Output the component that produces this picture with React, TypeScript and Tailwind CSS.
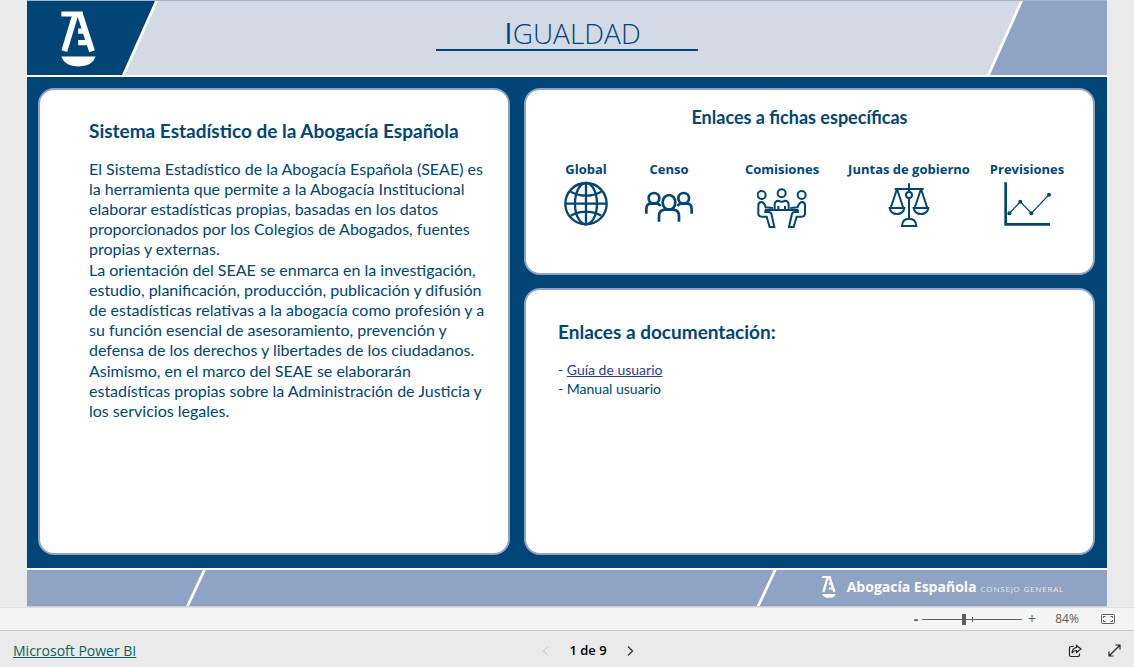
import React from "react";

const LogoMark = ({ className }: { className?: string }) => (
  <svg viewBox="0 0 106 168" className={className} fill="none" stroke="#fff" aria-hidden="true">
    <path d="M1 8H66" strokeWidth="15" />
    <path d="M44 8L10 121" strokeWidth="18" />
    <path d="M57 8L94 121" strokeWidth="18" />
    <path d="M52 60H72M52 95H84" strokeWidth="16" />
    <path d="M1 137H105Q95 167 53 167Q11 167 1 137Z" fill="#fff" stroke="none" />
  </svg>
);

const GlobeIcon = () => (
  <>
    <circle cx="75" cy="68" r="62" />
    <ellipse cx="75" cy="68" rx="33" ry="62" />
    <path d="M75 6V130M13 68H137M29 32Q75 56 121 32M29 104Q75 80 121 104" />
  </>
);

const PeopleIcon = () => (
  <g strokeWidth="8">
    <circle cx="30" cy="52" r="16" />
    <circle cx="119" cy="52" r="16" />
    <ellipse cx="75" cy="64" rx="19" ry="22" />
    <path d="M7 98V84Q7 69 20 68H38Q46 69 50 75" />
    <path d="M143 98V84Q143 69 130 68H112Q104 69 100 75" />
    <path d="M45 122V106Q45 87 62 86H88Q105 87 105 106V122" />
  </g>
);

const MeetingIcon = () => (
  <g strokeWidth="6">
    <circle cx="14" cy="42" r="12" />
    <circle cx="74" cy="37" r="12" />
    <circle cx="134" cy="42" r="12" />
    <path d="M48 81L26 79Q22 64 13 63Q4 63 4 74V99Q5 107 14 107H29L38 138H52L43 98Q41 93 34 93H25V87" />
    <path d="M100 81L122 79Q126 64 135 63Q144 63 144 74V99Q143 107 134 107H119L110 138H96L105 98Q107 93 114 93H123V87" />
    <path d="M24 87H124" />
    <path d="M53 84V70Q54 59 64 59Q74 66 84 59Q94 59 95 70V84M64 84V75M84 84V75" />
  </g>
);

const ScalesIcon = () => (
  <g strokeWidth="6">
    <path d="M75 7V33M75 51V114M32 24H119" />
    <circle cx="75" cy="42" r="9" />
    <path d="M39 24L20 81M39 24L58 81M17 81H61Q58 99 39 99Q20 99 17 81Z" />
    <path d="M111 24L92 81M111 24L130 81M89 81H133Q130 99 111 99Q92 99 89 81Z" />
    <path d="M54 135H97Q96 113 75 113Q55 113 54 135Z" />
  </g>
);

const ChartIcon = () => (
  <>
    <path d="M11 4V130H144" strokeWidth="8" />
    <path d="M22 97L55 62L88 97L141 41" strokeWidth="4" />
    <g fill="#004575" stroke="none">
      <circle cx="22" cy="97" r="6" />
      <circle cx="55" cy="62" r="6" />
      <circle cx="88" cy="97" r="6" />
      <circle cx="141" cy="41" r="6" />
    </g>
  </>
);

const sheets = [
  { title: "Global", Icon: GlobeIcon },
  { title: "Censo", Icon: PeopleIcon },
  { title: "Comisiones", Icon: MeetingIcon },
  { title: "Juntas de gobierno", Icon: ScalesIcon },
  { title: "Previsiones", Icon: ChartIcon },
];

const Panel = ({ className, children }: { className: string; children: React.ReactNode }) => (
  <section className={`rounded-2xl border-2 border-[#8fa3c4] bg-white ${className}`}>
    {children}
  </section>
);

const ReportHeader = () => (
  <header className="flex h-[77px] justify-between border-t border-b-2 border-t-[#a3b6ca] border-b-white bg-[#d3dae6]">
    <div className="w-[131px] bg-white [clip-path:polygon(0_0,100%_0,98px_100%,0_100%)]">
      <div className="h-full w-32 bg-[#004575] pt-[10px] pl-[34px] [clip-path:polygon(0_0,100%_0,95px_100%,0_100%)]">
        <LogoMark className="h-14 w-[35px]" />
      </div>
    </div>

    <div className="mr-3 w-[262px] self-start border-b-2 border-[#004575] pt-4 text-center">
      <h1 className="pl-3 font-['Open_Sans',sans-serif] text-[28px] leading-8 font-light text-[#004575]">
        <span className="text-[30px] font-normal">I</span>GUALDAD
      </h1>
    </div>

    <div className="flex w-[120px] justify-end bg-white [clip-path:polygon(33px_0,100%_0,100%_100%,0_100%)]">
      <div className="h-full w-[117px] bg-[#8fa3c4] [clip-path:polygon(33px_0,100%_0,100%_100%,0_100%)]" />
    </div>
  </header>
);

const Slash = () => (
  <div className="h-full w-5 bg-white [clip-path:polygon(17px_0,100%_0,3px_100%,0_100%)]" />
);

const ReportFooter = () => (
  <footer className="flex h-[39px] justify-between border-t-2 border-b border-t-white border-b-[#c3cddd] bg-[#8fa3c4] pl-[159px]">
    <Slash />
    <div className="flex">
      <Slash />
      <div className="flex items-center pr-[43px] pb-[3px] pl-[45px] text-white">
        <LogoMark className="h-[22px] w-[14px]" />
        <span className="pl-[11px] font-['Open_Sans',sans-serif] text-sm font-bold whitespace-nowrap">
          Abogacía Española
        </span>
        <span className="pt-1 pl-1 font-['Open_Sans',sans-serif] text-[8px] tracking-widest whitespace-nowrap text-[#e3e8f0]">
          CONSEJO GENERAL
        </span>
      </div>
    </div>
  </footer>
);

const ZoomBar = () => (
  <div className="flex h-[24px] items-center justify-end border-t border-b border-t-[#e0e0e0] border-b-[#c8c8c8] bg-[#f4f4f4] pr-[18px] font-['Open_Sans',sans-serif] text-[#605e5c]">
    <button type="button" aria-label="Alejar" className="w-3 text-sm leading-5 font-bold">
      -
    </button>
    <input
      type="range"
      min={0}
      max={200}
      defaultValue={84}
      aria-label="Zoom"
      className="h-[11px] w-[100px] appearance-none bg-[linear-gradient(#605e5c,#605e5c),linear-gradient(#605e5c,#605e5c)] bg-[length:100%_1px,1px_5px] bg-[position:center,50px_center] bg-no-repeat [&::-webkit-slider-thumb]:h-[11px] [&::-webkit-slider-thumb]:w-1 [&::-webkit-slider-thumb]:appearance-none [&::-webkit-slider-thumb]:bg-[#605e5c]"
    />
    <button type="button" aria-label="Acercar" className="w-5 text-sm leading-5">
      +
    </button>
    <span className="w-[50px] text-center text-xs">84%</span>
    <button type="button" aria-label="Ajustar a la página" className="ml-2">
      <svg width="16" height="12" viewBox="0 0 16 12" fill="none" stroke="#605e5c">
        <rect x="1.5" y="1.5" width="13" height="9" rx="1" />
        <path d="M5.5 3.5H3.5V5M3.5 7V8.5H5.5M10.5 3.5H12.5V5M12.5 7V8.5H10.5" />
      </svg>
    </button>
  </div>
);

const StatusBar = () => (
  <div className="grid h-9 grid-cols-[1fr_auto_1fr] items-center bg-[#eaeaea] px-[13px] pt-[3px] font-['Open_Sans',sans-serif] text-sm">
    <a href="#powerbi" className="text-[#0b6160] underline">
      Microsoft Power BI
    </a>
    <div className="flex items-center gap-5 pl-[42px]">
      <button type="button" aria-label="Página anterior" disabled>
        <svg width="7" height="10" viewBox="0 0 7 10" fill="none" stroke="#c0c0c0">
          <path d="M6 .5L1.5 5L6 9.5" />
        </svg>
      </button>
      <span className="text-[13px] font-semibold text-black">1 de 9</span>
      <button type="button" aria-label="Página siguiente">
        <svg width="7" height="10" viewBox="0 0 7 10" fill="none" stroke="#333" strokeWidth="1.3">
          <path d="M1 .5L5.5 5L1 9.5" />
        </svg>
      </button>
    </div>
    <div className="flex justify-end gap-[26px]">
      <button type="button" aria-label="Compartir">
        <svg width="14" height="14" viewBox="0 0 14 14" fill="none" stroke="#222" strokeWidth="1.2">
          <path d="M5.5 2.5H3Q1.5 2.5 1.5 4V11Q1.5 12.5 3 12.5H10Q11.5 12.5 11.5 11V9.5" />
          <path d="M8.5 1.5L13 5L8.5 8.5V6.5Q5.5 6.5 4 9Q4.5 4 8.5 3.5Z" />
        </svg>
      </button>
      <button type="button" aria-label="Pantalla completa">
        <svg width="13" height="13" viewBox="0 0 13 13" fill="none" stroke="#222" strokeWidth="1.2">
          <path d="M1 12L12 1M7.5 1H12V5.5M1 7.5V12H5.5" />
        </svg>
      </button>
    </div>
  </div>
);

export default function App() {
  return (
    <div className="flex min-h-screen flex-col bg-[#eaeaea]">
      <div className="flex flex-1 flex-col px-[27px]">
        <ReportHeader />

        <main className="grid flex-1 grid-cols-[472fr_571fr] gap-[14px] bg-[#004575] pt-[11px] pr-3 pb-[13px] pl-[11px] font-[Lato,sans-serif] text-[#004575]">
          <Panel className="pt-[29px] pr-4 pl-[49px]">
            <h2 className="text-[19px] leading-6 font-bold">
              Sistema Estadístico de la Abogacía Española
            </h2>
            <div className="space-y-px pt-4 text-base leading-5">
              <p>
                El Sistema Estadístico de la Abogacía Española (SEAE) es la herramienta que
                permite a la Abogacía Institucional elaborar estadísticas propias, basadas en
                los datos proporcionados por los Colegios de Abogados, fuentes propias y
                externas.
              </p>
              <p>
                La orientación del SEAE se enmarca en la investigación, estudio,
                planificación, producción, publicación y difusión de estadísticas relativas a
                la abogacía como profesión y a su función esencial de asesoramiento,
                prevención y defensa de los derechos y libertades de los ciudadanos.
              </p>
              <p>
                Asimismo, en el marco del SEAE se elaborarán estadísticas propias sobre la
                Administración de Justicia y los servicios legales.
              </p>
            </div>
          </Panel>

          <div className="grid grid-rows-[187fr_268fr] gap-[13px]">
            <Panel className="pt-[15px]">
              <h2 className="pr-5 text-center text-lg leading-6 font-bold">
                Enlaces a fichas específicas
              </h2>
              <nav className="grid grid-cols-[72fr_94fr_132fr_122fr_114fr] pt-7 pr-[9px] pl-6">
                {sheets.map(({ title, Icon }) => (
                  <a
                    key={title}
                    href="#"
                    className="flex flex-col items-center font-['Open_Sans',sans-serif] text-[13px] leading-6 font-bold whitespace-nowrap"
                  >
                    {title}
                    <svg
                      width="50"
                      height="48"
                      viewBox="0 0 150 144"
                      fill="none"
                      stroke="#004575"
                      strokeWidth="7"
                      aria-hidden="true"
                    >
                      <Icon />
                    </svg>
                  </a>
                ))}
              </nav>
            </Panel>

            <Panel className="px-8 pt-[30px]">
              <h2 className="text-[19px] leading-6 font-bold">Enlaces a documentación:</h2>
              <ul className="pt-4 text-sm leading-[19px]">
                <li>
                  -{" "}
                  <a href="#guia" className="text-[#2f3a8c] underline">
                    Guía de usuario
                  </a>
                </li>
                <li>- Manual usuario</li>
              </ul>
            </Panel>
          </div>
        </main>

        <ReportFooter />
      </div>

      <ZoomBar />
      <StatusBar />
    </div>
  );
}
